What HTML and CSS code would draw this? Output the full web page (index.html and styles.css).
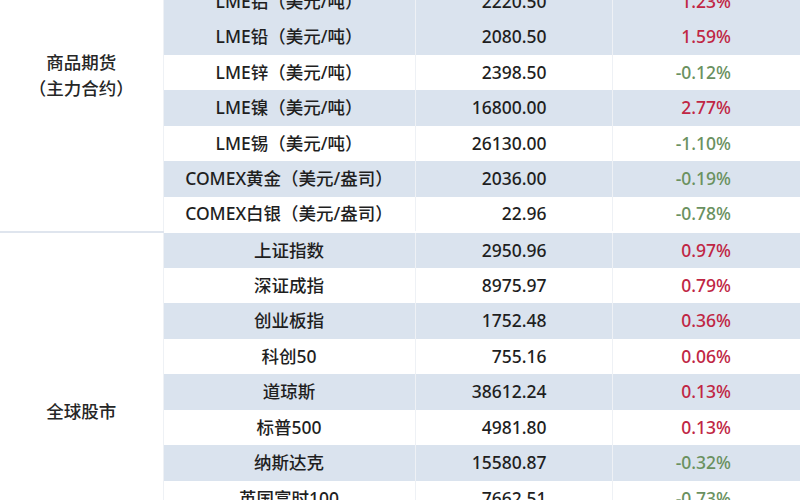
FILE: index.html
```html
<!DOCTYPE html>
<html lang="zh-CN">
<head>
<meta charset="utf-8">
<title>行情</title>
<link rel="stylesheet" href="styles.css">
</head>
<body>
<div class="viewport">
<table class="quotes">
  <colgroup>
    <col class="c-cat"><col class="c-name"><col class="c-price"><col class="c-chg">
  </colgroup>
  <tbody class="section">
    <tr class="alt"><td class="cat" rowspan="9"><span>商品期货</span><span>（主力合约）</span></td><td class="name">布伦特原油（美元/桶）</td><td class="price">81.62</td><td class="chg up">0.51%</td></tr>
    <tr><td class="name">LME铜（美元/吨）</td><td class="price">8312.00</td><td class="chg up">0.84%</td></tr>
    <tr class="alt"><td class="name">LME铝（美元/吨）</td><td class="price">2220.50</td><td class="chg up">1.23%</td></tr>
    <tr class="alt2"><td class="name">LME铅（美元/吨）</td><td class="price">2080.50</td><td class="chg up">1.59%</td></tr>
    <tr><td class="name">LME锌（美元/吨）</td><td class="price">2398.50</td><td class="chg down">-0.12%</td></tr>
    <tr class="alt2"><td class="name">LME镍（美元/吨）</td><td class="price">16800.00</td><td class="chg up">2.77%</td></tr>
    <tr><td class="name">LME锡（美元/吨）</td><td class="price">26130.00</td><td class="chg down">-1.10%</td></tr>
    <tr class="alt2"><td class="name">COMEX黄金（美元/盎司）</td><td class="price">2036.00</td><td class="chg down">-0.19%</td></tr>
    <tr><td class="name">COMEX白银（美元/盎司）</td><td class="price">22.96</td><td class="chg down">-0.78%</td></tr>
  </tbody>
  <tbody class="section">
    <tr class="alt2 first"><td class="cat" rowspan="10"><span>全球股市</span></td><td class="name">上证指数</td><td class="price">2950.96</td><td class="chg up">0.97%</td></tr>
    <tr><td class="name">深证成指</td><td class="price">8975.97</td><td class="chg up">0.79%</td></tr>
    <tr class="alt2"><td class="name">创业板指</td><td class="price">1752.48</td><td class="chg up">0.36%</td></tr>
    <tr><td class="name">科创50</td><td class="price">755.16</td><td class="chg up">0.06%</td></tr>
    <tr class="alt2"><td class="name">道琼斯</td><td class="price">38612.24</td><td class="chg up">0.13%</td></tr>
    <tr><td class="name">标普500</td><td class="price">4981.80</td><td class="chg up">0.13%</td></tr>
    <tr class="alt2"><td class="name">纳斯达克</td><td class="price">15580.87</td><td class="chg down">-0.32%</td></tr>
    <tr><td class="name">英国富时100</td><td class="price">7662.51</td><td class="chg down">-0.73%</td></tr>
    <tr class="alt2"><td class="name">德国DAX</td><td class="price">17037.35</td><td class="chg up">0.54%</td></tr>
    <tr><td class="name">日经225</td><td class="price">37963.97</td><td class="chg up">0.20%</td></tr>
  </tbody>
</table>
</div>
</body>
</html>
```

FILE: styles.css
```css
html, body {
  margin: 0;
  padding: 0;
  background: #ffffff;
}
body {
  width: 800px;
  height: 500px;
  overflow: hidden;
  font-family: "Noto Sans", "Noto Sans CJK SC", sans-serif;
  font-weight: 500;
  color: #1f1f1f;
}
.viewport {
  margin-top: -87.5px;
}
.quotes {
  width: 800px;
  border-collapse: collapse;
  table-layout: fixed;
  font-size: 17.5px;
}
.c-cat { width: 163px; }
.c-name { width: 252px; }
.c-price { width: 197px; }
.c-chg { width: 188px; }
.quotes td {
  height: 35.5px;
  padding: 0;
  box-sizing: border-box;
  border-left: 1px solid #eef1f5;
  white-space: nowrap;
  line-height: 1;
}
.quotes tr.alt2 td:not(.cat),
.quotes tr.alt td:not(.cat) {
  background: #dae3ee;
}
.section + .section tr.first td {
  border-top: 2px solid #dfe5ee;
}
.section + .section tr.first td:not(.cat) {
  border-top-color: #ffffff;
}
.cat {
  text-align: center;
  vertical-align: middle;
  border-left: none !important;
  background: #ffffff;
  color: #262626;
  padding-top: 6px !important;
}
.cat span {
  display: block;
  line-height: 26px;
}
.section + .section .cat {
  padding-top: 2px !important;
}
.name {
  text-align: center;
}
.price {
  text-align: right;
  padding-right: 65px !important;
}
.chg {
  text-align: right;
  padding-right: 69px !important;
}
.up { color: #c02644; }
.down { color: #6a9160; }
```
